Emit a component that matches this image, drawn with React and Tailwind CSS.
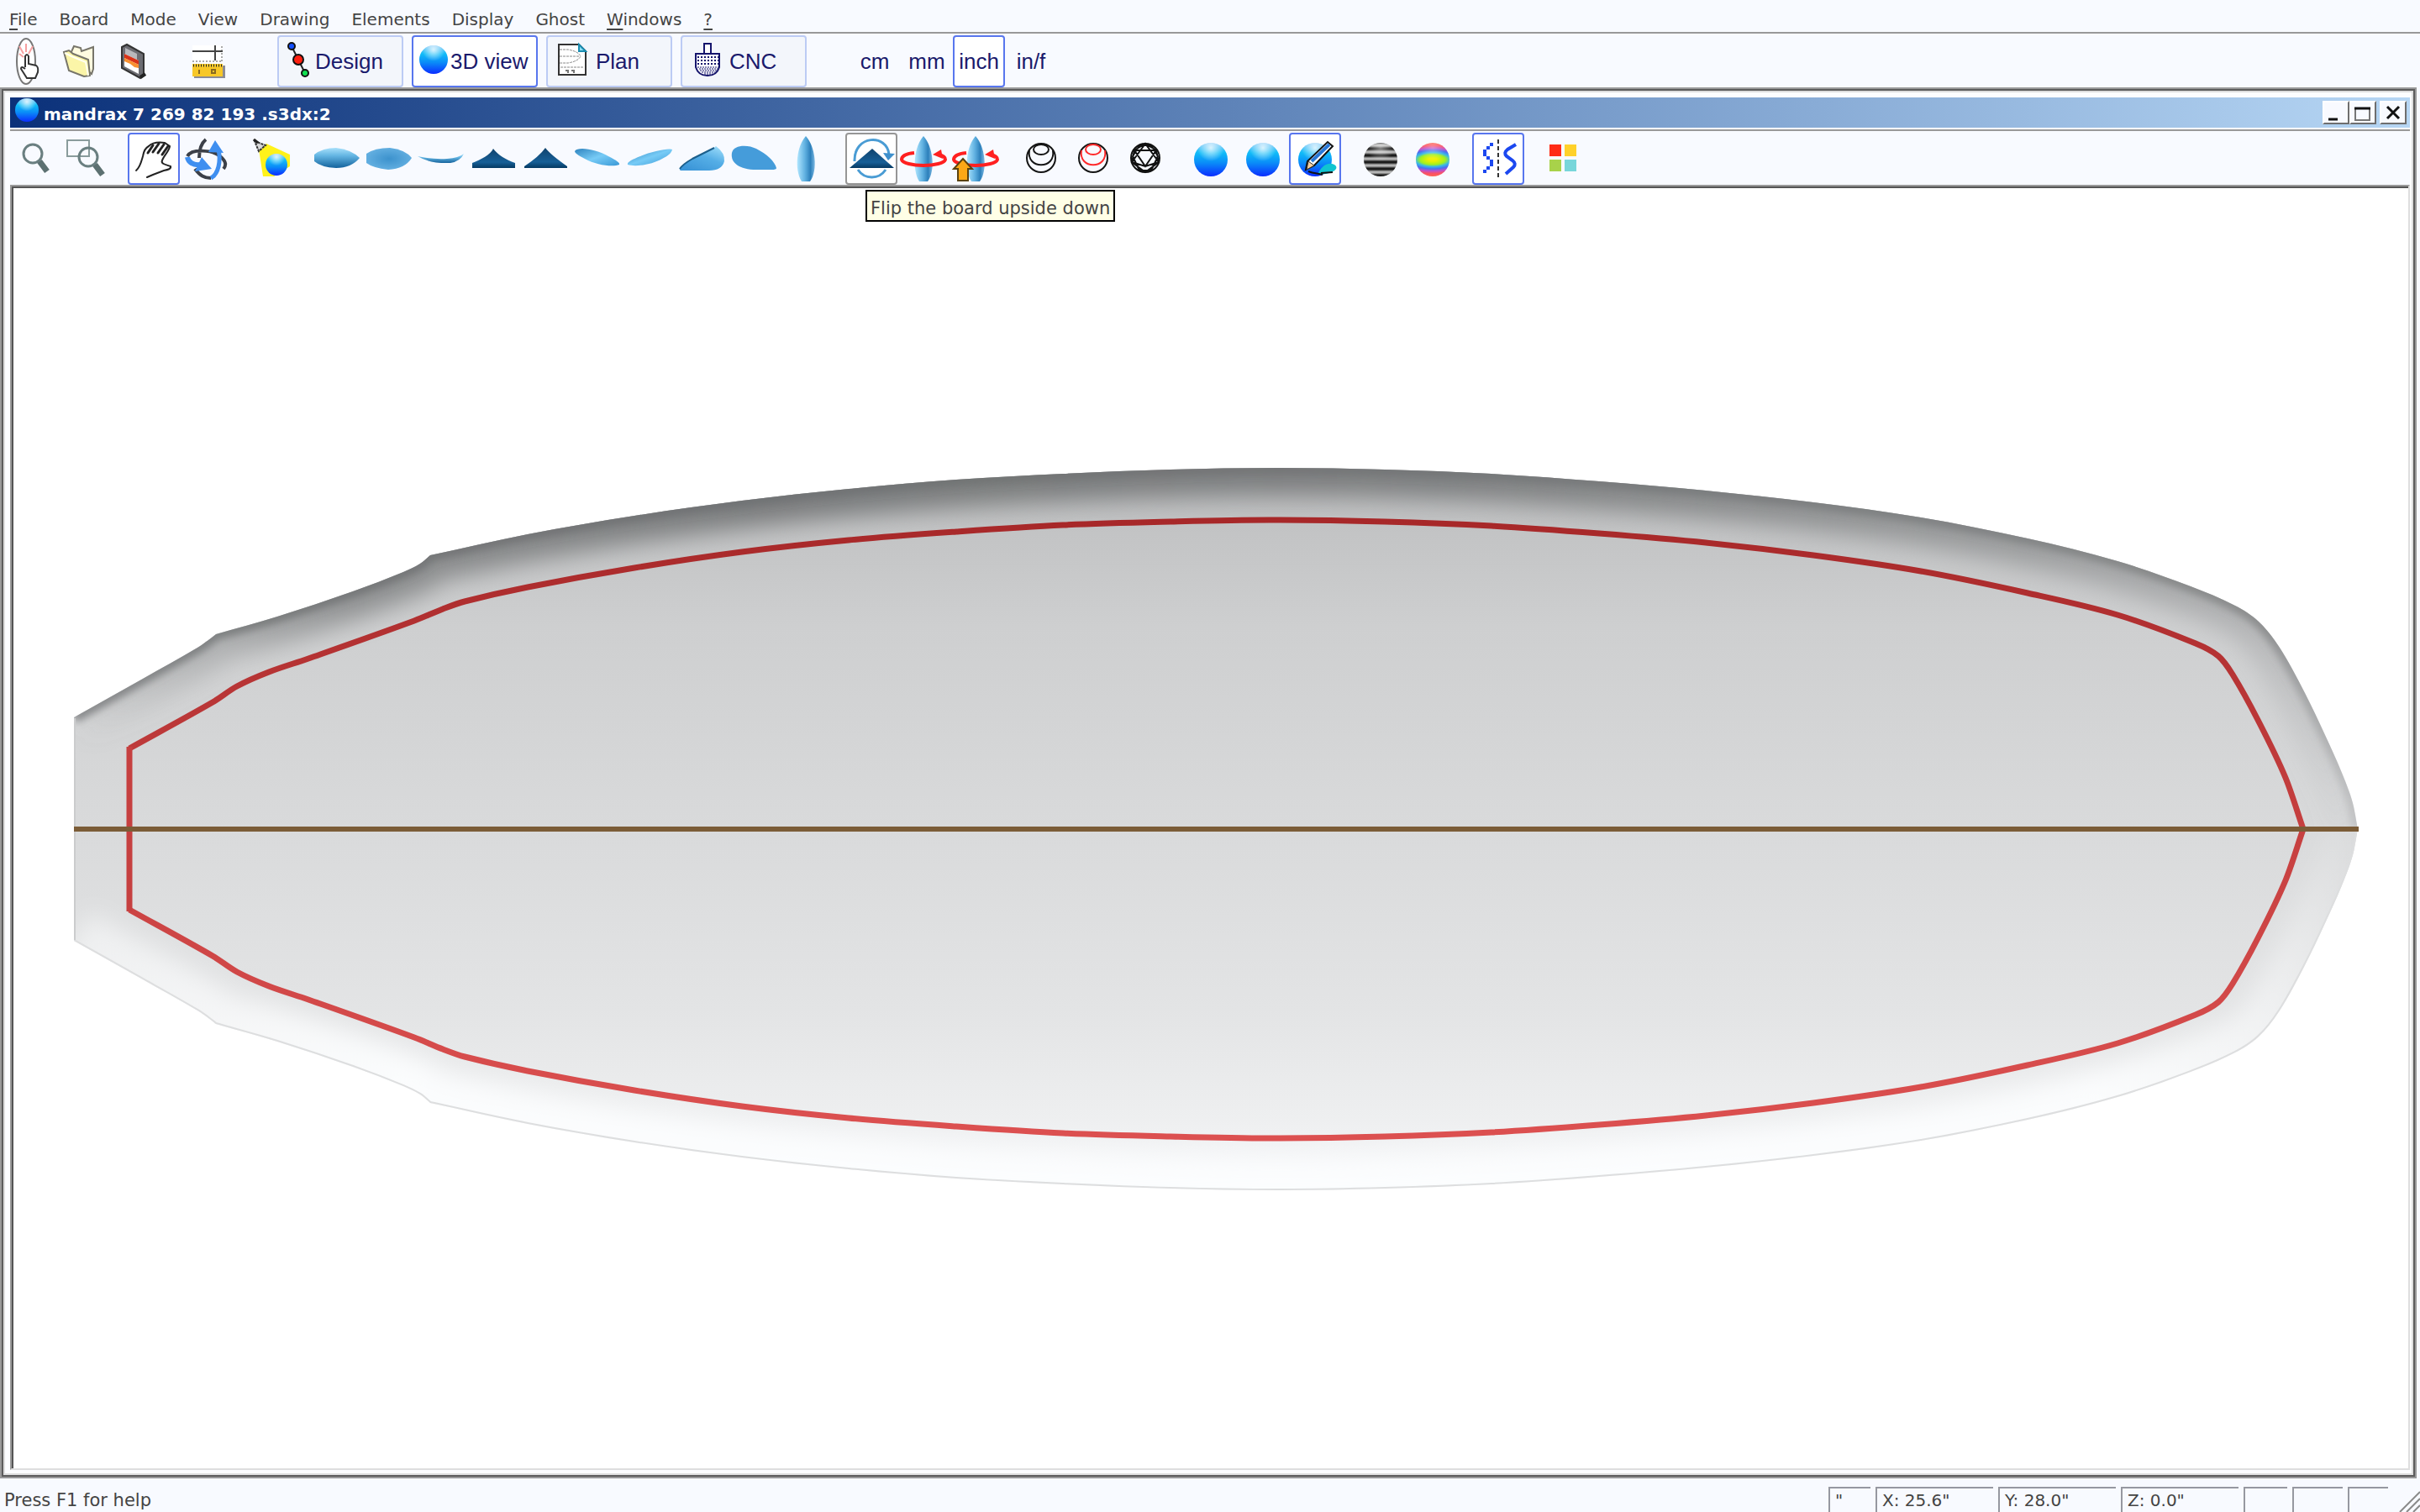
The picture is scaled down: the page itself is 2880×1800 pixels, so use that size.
import { useState } from 'react'
import clsx from 'clsx'

const MENUS = [
  { key: 'F', rest: 'ile' },
  { key: '', rest: 'Board' },
  { key: '', rest: 'Mode' },
  { key: '', rest: 'View' },
  { key: '', rest: 'Drawing' },
  { key: '', rest: 'Elements' },
  { key: '', rest: 'Display' },
  { key: '', rest: 'Ghost' },
  { key: 'W', rest: 'indows' },
  { key: '?', rest: '' },
]

const UNITS = ['cm', 'mm', 'inch', 'in/f']

// Half outlines of the board, tail to nose. y is measured on the upper half, the lower half is mirrored.
const AXIS = 987
const OUTLINE = [
  [[88, 854], [170, 808], [235, 771], [248, 762], [257, 755]],
  [[257, 755], [330, 734], [420, 704], [480, 681], [500, 671], [512, 661]],
  [
    [512, 661], [628, 636], [755, 614], [883, 596], [1010, 582], [1138, 571], [1265, 564], [1393, 559], [1520, 557],
    [1648, 559], [1775, 564], [1903, 573], [2030, 584], [2158, 598], [2286, 616], [2413, 641], [2520, 668],
    [2607, 698], [2660, 721], [2688, 740], [2713, 771], [2743, 825], [2767, 875], [2787, 920], [2800, 956], [2806, 987],
  ],
]
const STRINGER_BOX = [
  [
    [154, 891], [253, 836], [282, 817], [320, 800], [367, 784], [493, 739], [527, 725], [553, 716], [628, 699],
    [755, 676], [883, 657], [1010, 643], [1138, 633], [1265, 625], [1393, 621], [1510, 619], [1648, 621], [1775, 626],
    [1903, 635], [2030, 646], [2158, 661], [2286, 680], [2413, 706], [2520, 732], [2613, 766], [2640, 781],
    [2657, 803], [2687, 857], [2720, 926], [2741, 987],
  ],
]

const mirror = (sections) => sections.map((s) => s.map(([x, y]) => [x, 2 * AXIS - y]))

// Smooth curve through the points of one section
const spline = (pts) =>
  pts.slice(1).map((p, i) => {
    const a = pts[i - 1] || pts[i]
    const b = pts[i]
    const d = pts[i + 2] || p
    // tangents scaled by the span keep uneven point spacing from overshooting
    const span = p[0] - b[0]
    const t1 = (p[1] - a[1]) / (p[0] - a[0] || 1)
    const t2 = (d[1] - b[1]) / (d[0] - b[0] || 1)
    return `C${b[0] + span / 3} ${b[1] + (t1 * span) / 3} ${p[0] - span / 3} ${p[1] - (t2 * span) / 3} ${p[0]} ${p[1]}`
  }).join('')

const curve = (sections) => `M${sections[0][0].join(' ')}` + sections.map(spline).join('')
const top = curve(OUTLINE)
const bottom = curve(mirror(OUTLINE))
const boxTop = curve(STRINGER_BOX)
const boxBottom = curve(mirror(STRINGER_BOX))

function Defs() {
  return (
    <svg width="0" height="0" className="absolute" aria-hidden="true">
      <defs>
        <linearGradient id="sphere" x1="0" y1="0" x2="0" y2="1">
          <stop offset="0" stopColor="#7fc8f8" />
          <stop offset=".3" stopColor="#10bcf8" />
          <stop offset=".6" stopColor="#0a8cf8" />
          <stop offset="1" stopColor="#0b2cff" />
        </linearGradient>
        <radialGradient id="shine" cx=".5" cy=".15" r=".4">
          <stop offset="0" stopColor="#fff" stopOpacity=".8" />
          <stop offset="1" stopColor="#fff" stopOpacity="0" />
        </radialGradient>
        <linearGradient id="deck" x1="0" y1="0" x2="0" y2="1">
          <stop offset="0" stopColor="#a8e0fb" />
          <stop offset=".4" stopColor="#62b4e2" />
          <stop offset="1" stopColor="#14629c" />
        </linearGradient>
        <radialGradient id="under">
          <stop offset="0" stopColor="#3c92cd" />
          <stop offset="1" stopColor="#62aee0" />
        </radialGradient>
        <linearGradient id="upright">
          <stop offset="0" stopColor="#b0e6ff" />
          <stop offset=".45" stopColor="#5fb0e0" />
          <stop offset=".75" stopColor="#2d80bb" />
          <stop offset="1" stopColor="#7cb8e2" />
        </linearGradient>
        <linearGradient id="slice" x1="0" y1="0" x2="0" y2="1">
          <stop offset="0" stopColor="#10436d" />
          <stop offset=".7" stopColor="#175f97" />
          <stop offset="1" stopColor="#053962" />
        </linearGradient>
        <linearGradient id="persp" x1="0" y1="0" x2="1" y2="1">
          <stop offset="0" stopColor="#2f84bf" />
          <stop offset=".5" stopColor="#77cbf6" />
          <stop offset="1" stopColor="#3a98d6" />
        </linearGradient>
        <linearGradient id="wing" x1="1" y1="0" x2=".3" y2="1">
          <stop offset="0" stopColor="#a6e2fc" />
          <stop offset=".5" stopColor="#55aee6" />
          <stop offset="1" stopColor="#3c96d8" />
        </linearGradient>
        <linearGradient id="zebra" x1="0" y1="15" x2="0" y2="19" gradientUnits="userSpaceOnUse" spreadMethod="reflect">
          <stop offset=".2" stopColor="#b4b4b4" />
          <stop offset=".8" stopColor="#1c1c1c" />
        </linearGradient>
        <radialGradient id="rainbow" cx=".5" cy=".5" r=".5" gradientTransform="translate(-.75 0) scale(2.5 1)">
          <stop offset=".1" stopColor="#eef000" />
          <stop offset=".3" stopColor="#a0f020" />
          <stop offset=".42" stopColor="#38b8e8" />
          <stop offset=".55" stopColor="#4a70f0" />
          <stop offset=".68" stopColor="#c050c8" />
          <stop offset=".82" stopColor="#f85068" />
          <stop offset="1" stopColor="#ff6450" />
        </radialGradient>
      </defs>
    </svg>
  )
}

function Sphere({ cx = 31, cy = 32, r = 20 }) {
  return (
    <>
      <circle cx={cx} cy={cy} r={r} fill="url(#sphere)" />
      <circle cx={cx} cy={cy} r={r} fill="url(#shine)" />
    </>
  )
}

function Icon({ children }) {
  return (
    <svg viewBox="0 0 62 62" fill="none" className="h-[62px] w-[62px] shrink-0" aria-hidden="true">
      {children}
    </svg>
  )
}

const Upright = () => <path d="M31 4C20 16 17 44 26 58H36C46 44 42 16 31 4Z" fill="url(#upright)" />

const Spin = () => (
  <>
    <path d="M20 24C10 25 5 28 5 32C6 36 18 39 31 39C44 39 56 36 57 32C57 29 54 27 49 26" stroke="#ff2020" strokeWidth="4" />
    <path d="M42 26L52 20L54 31Z" fill="#ff2020" />
  </>
)

const Wire = ({ color = '#151515' }) => (
  <>
    <circle cx="31" cy="30" r="17" stroke="#151515" strokeWidth="2" />
    <ellipse cx="31" cy="20" rx="9" ry="6" stroke={color} strokeWidth="2" />
    <path d="M17 21C13 44 49 44 45 21" stroke={color} strokeWidth="2" />
  </>
)

const Lens = ({ x, y }) => (
  <>
    <circle cx={x} cy={y} r="11" stroke="#6a7f80" strokeWidth="3" />
    <path d={`M${x + 8} ${y + 9}L${x + 17} ${y + 21}`} stroke="#5c7071" strokeWidth="7" />
  </>
)

const VIEW_TOOLS = [
  [
    { id: 'Zoom', icon: <Lens x={27} y={25} /> },
    { id: 'Zoom window', icon: <><path d="M6 9H32V28H6Z" stroke="#8a9c9c" strokeWidth="2" /><Lens x={31} y={29} /></> },
  ],
  [
    {
      id: 'Pan', on: true,
      icon: (
        <g stroke="#222" strokeWidth="2" strokeLinecap="round">
          <path d="M10 45C15 41 16 35 18 28C19 22 21 18 25 16C29 12 36 11 44 12L50 16C50 21 43 27 41 33C39 37 45 38 51 40C52 43 48 44 43 45L30 50L23 53" />
          <path d="M24 24L30 15M30 23L37 13M36 24L43 14M41 26L48 16" strokeWidth="3" />
        </g>
      ),
    },
    {
      id: 'Rotate',
      icon: (
        <>
          <path d="M31 8C25 13 23 22 23 30M9 28C14 19 38 20 48 28C56 35 55 39 52 43M18 43C24 51 29 54 37 54" stroke="#3c4048" strokeWidth="4" />
          <path d="M42 9L52 24L34 23Z" fill="#3f8ff0" />
          <path d="M46 20C49 34 46 49 37 54" stroke="#3f8ff0" strokeWidth="5" />
          <path d="M9 29C10 35 16 39 24 38" stroke="#3f8ff0" strokeWidth="6" />
          <path d="M26 29L38 43L18 46Z" fill="#3f8ff0" />
        </>
      ),
    },
  ],
  [
    {
      id: 'Light',
      icon: (
        <>
          <path d="M16 20L25 13L53 26V40L34 52H21Z" fill="#fff21a" />
          <path d="M11 10L24 15L16 22Z" fill="#d8d8d8" stroke="#333" strokeWidth="2" strokeDasharray="3 1" />
          <path d="M10 8L15 12" stroke="#222" strokeWidth="3" />
          <Sphere cx={37} cy={38} r={13} />
        </>
      ),
    },
  ],
  [
    { id: 'Top view', icon: <path d="M4 26Q14 18 30 18Q48 20 58 30Q48 42 30 42Q12 41 4 34Z" fill="url(#deck)" /> },
    { id: 'Bottom view', icon: <path d="M4 25Q14 18 32 18Q50 20 58 30Q50 43 30 44Q12 42 4 36Z" fill="url(#under)" /> },
    { id: 'Side view', icon: <path d="M3 28Q20 32 38 31Q52 30 58 25Q54 34 42 36Q18 37 3 28Z" fill="url(#deck)" /> },
    { id: 'Front view', icon: <path d="M31 19C36 26 46 32 57 36V42H6V36C16 32 28 26 31 19Z" fill="url(#slice)" /> },
    { id: 'Back view', icon: <path d="M31 18Q37 26 57 40V42H6V40Q24 28 31 18Z" fill="url(#slice)" /> },
    { id: 'Left perspective', icon: <path d="M4 22C8 16 30 20 44 28C54 33 58 36 57 38C50 41 30 39 16 31C8 27 4 24 4 22Z" fill="url(#persp)" /> },
    { id: 'Right perspective', icon: <path d="M58 20C54 18 34 22 20 28C10 32 4 35 5 38C14 41 34 38 46 31C54 27 57 24 58 20Z" fill="url(#persp)" /> },
    {
      id: 'Rear perspective',
      icon: (
        <>
          <path d="M5 43Q8 38 20 31L46 18L48 16Q59 24 58 34Q55 45 40 45H8Q4 45 5 43Z" fill="url(#wing)" />
          <path d="M5 43Q8 38 20 31L46 18" stroke="#1c5f8c" strokeWidth="2" />
        </>
      ),
    },
    { id: 'Nose perspective', icon: <path d="M5 24C7 14 24 14 34 19C46 25 56 34 58 42Q58 44 52 44H34C14 44 3 36 5 24Z" fill="#459cda" /> },
    { id: 'Upright view', icon: <Upright /> },
  ],
  [
    {
      id: 'Flip', hover: true, tip: 'Flip the board upside down',
      icon: (
        <>
          <path d="M11 34C10 2 50 1 52 26M15 44C23 56 40 56 48 44" stroke="#4a9cd4" strokeWidth="3" />
          <path d="M45 24L59 25L51 33Z" fill="#3f90cc" />
          <path d="M32 19L58 42H5Z" fill="url(#slice)" />
        </>
      ),
    },
    { id: 'Spin', icon: <><Upright /><Spin /></> },
    {
      id: 'Spin up',
      icon: (
        <>
          <Upright />
          <Spin />
          <path d="M16 31L27 43H22V57H10V43H5Z" fill="#fca816" stroke="#5a4210" strokeWidth="2" />
        </>
      ),
    },
  ],
  [
    { id: 'Slices', icon: <Wire /> },
    { id: 'Red slices', icon: <Wire color="#ff2a2a" /> },
    {
      id: 'Mesh',
      icon: (
        <g stroke="#111" strokeWidth="2">
          <circle cx="31" cy="30" r="17" />
          <path d="M31 13L18 21L15 35L31 40L47 35L44 21ZM18 21L44 21L31 40ZM31 13L15 35L31 47L47 35ZM24 15L38 15L46 28L38 45H24L16 28Z" />
        </g>
      ),
    },
  ],
  [
    { id: 'Smooth', icon: <Sphere /> },
    { id: 'Matt', icon: <Sphere /> },
    {
      id: 'Paint', on: true,
      icon: (
        <>
          <Sphere />
          <path d="M34 50C38 40 46 34 54 38C60 42 54 47 44 49Z" fill="#10c4d0" />
          <path d="M23 46C30 49 34 48 40 50M38 48L52 47" stroke="#111" strokeWidth="2" />
          <path d="M20 44L22 34L46 11L52 16L30 39Z" fill="#fff" stroke="#111" strokeWidth="2" />
          <path d="M27 34L48 14" stroke="#2878d8" strokeWidth="4" />
          <path d="M21 44L23 34L30 39Z" fill="#f8d0a0" stroke="#333" />
        </>
      ),
    },
  ],
  [
    { id: 'Zebra', icon: <><circle cx="31" cy="32" r="20" fill="url(#zebra)" /><circle cx="31" cy="32" r="20" fill="url(#shine)" opacity=".6" /></> },
    { id: 'Curvature', icon: <><circle cx="31" cy="32" r="20" fill="url(#rainbow)" /><circle cx="31" cy="32" r="20" fill="url(#shine)" opacity=".4" /></> },
  ],
  [
    {
      id: 'Smoothing', on: true,
      icon: (
        <>
          <g fill="#1c48f0">
            <path d="M21 12h4v4h-4zM17 16h4v4h-4zM13 20h4v8h-4zM17 28h4v4h-4zM21 32h4v8h-4zM17 40h4v4h-4zM13 44h4v4h-4z" />
          </g>
          <path d="M31 8V54" stroke="#333" strokeWidth="2" strokeDasharray="5 3" />
          <path d="M52 14L42 20Q37 24 41 28L48 33Q53 37 49 41L40 49" stroke="#1c48f0" strokeWidth="4" />
        </>
      ),
    },
  ],
  [
    {
      id: 'Colors',
      icon: (
        <>
          <path d="M14 14H28V28H14Z" fill="#ff2b16" />
          <path d="M32 14H46V28H32Z" fill="#ffd12a" />
          <path d="M14 32H28V46H14Z" fill="#a8d24a" />
          <path d="M32 32H46V46H32Z" fill="#78d6da" />
        </>
      ),
    },
  ],
]

const MODES = [
  {
    id: 'Design', iconWidth: 'w-[43px]', box: '0 0 43 62',
    icon: (
      <>
        <path d="M15 13L31 45" stroke="#222" strokeWidth="2" />
        <g stroke="#111" strokeWidth="2">
          <circle cx="15" cy="13" r="4" fill="#1450ff" />
          <circle cx="23" cy="29" r="6" fill="#ff2010" />
          <circle cx="31" cy="45" r="4" fill="#10e050" />
        </g>
      </>
    ),
  },
  { id: '3D view', iconWidth: 'w-11', box: '0 0 44 62', icon: <Sphere cx={24} cy={29} r={17} /> },
  {
    id: 'Plan', iconWidth: 'w-[57px]', box: '0 0 57 62',
    icon: (
      <>
        <path d="M13 11H37L45 19V47H13Z" fill="#fff" stroke="#333" strokeWidth="2" />
        <path d="M37 11V19H45Z" fill="#8ce0f4" stroke="#1a8cb0" strokeWidth="2" />
        <path d="M14 17H24Q36 19 39 25Q36 31 24 33H14M14 25H38M15 38H42" stroke="#888" strokeDasharray="3 1" />
        <path d="M21 42h3v3M28 42h3v3" stroke="#777" strokeWidth="2" />
      </>
    ),
  },
  {
    id: 'CNC', iconWidth: 'w-14', box: '0 0 56 62',
    icon: (
      <>
        <path d="M26 22V10H34V22" fill="#fff" stroke="#15156c" strokeWidth="2" />
        <path d="M16 22H44V38Q41 48 30 48Q19 48 16 38Z" fill="#fff" stroke="#15156c" strokeWidth="2" />
        <path d="M18 26H43M18 30H43M18 34H43" stroke="#15156c" strokeWidth="2" strokeDasharray="2 2" />
        <path d="M18 38H43M20 40H42M21 42H41M23 44H39M26 46H36" stroke="#15156c" strokeWidth="1" strokeDasharray="2 1" />
      </>
    ),
  },
]

function FileTools() {
  const cell = 'flex h-[62px] w-[62px]'
  return (
    <>
      <button aria-label="New board" className={cell}>
        <Icon>
          <ellipse cx="30" cy="31" rx="11" ry="27" fill="#fff" stroke="#777" strokeWidth="2" />
          <path d="M22 13L27 22M30 10V20M38 13L33 22M22 22L27 26" stroke="#f6a0a0" strokeWidth="2" />
          <path d="M29 38V25Q31 21 33 25V34L42 36Q45 38 44 44L41 51H31L24 40Q24 36 29 40" fill="#fff" stroke="#333" strokeWidth="2" />
        </Icon>
      </button>
      <button aria-label="Open" className={cell}>
        <Icon>
          <path d="M25 13L33 15L34 19L48 14V40L46 46L20 24Z" fill="#fffbe0" stroke="#77756a" strokeWidth="2" />
          <path d="M13 20L19 18L24 22L42 29L44 48L37 49L19 42Z" fill="#fbf5a8" stroke="#77756a" strokeWidth="2" />
          <path d="M14 21L22 25L39 32L42 48" stroke="#fffff0" strokeWidth="2" />
        </Icon>
      </button>
      <button aria-label="Save" className={cell}>
        <Icon>
          <path d="M20 14L26 11L46 22V48L42 51L20 39Z" fill="#6c6c72" stroke="#333" strokeWidth="2" />
          <path d="M24 15L38 22V30L24 23Z" fill="#b8b8bc" />
          <path d="M23 22L40 30V46L23 37Z" fill="#fff" />
          <path d="M23 22L40 30V35L23 27Z" fill="#d83218" />
          <path d="M23 27L40 35V39L35 38L30 34L23 31Z" fill="#f89030" />
          <path d="M42 50L48 46" stroke="#222" strokeWidth="4" />
        </Icon>
      </button>
      <button aria-label="Measurements" className="ml-[30px] flex h-[62px] w-[62px]">
        <Icon>
          <path d="M12 12H48V34H12Z" fill="#fff" />
          <path d="M12 19H48M39 12V30" stroke="#444" strokeWidth="2" />
          <path d="M47 13V32M12 31H48" stroke="#555" strokeWidth="1" strokeDasharray="2 2" />
          <path d="M14 36H51V51H14Z" fill="#8c8c94" />
          <path d="M12 34H48V49H12Z" fill="#f8c828" />
          <path d="M13 36H48" stroke="#222" strokeWidth="3" strokeDasharray="1 2" />
          <path d="M20 41V46M35 41H39V45H35Z" stroke="#8a6a20" strokeWidth="2" />
        </Icon>
      </button>
    </>
  )
}

function Board() {
  return (
    <svg viewBox="16 224 2850 1524" className="block h-full w-full" role="img" aria-label="Board bottom view">
      <defs>
        <linearGradient id="hull" x1="0" y1="557" x2="0" y2="1417" gradientUnits="userSpaceOnUse">
          <stop offset="0" stopColor="#b6b7b8" />
          <stop offset=".08" stopColor="#c2c3c4" />
          <stop offset=".22" stopColor="#cecfd0" />
          <stop offset=".5" stopColor="#d9dadb" />
          <stop offset=".75" stopColor="#e3e4e5" />
          <stop offset=".9" stopColor="#eeeff0" />
          <stop offset="1" stopColor="#f6f7f9" />
        </linearGradient>
        <linearGradient id="boxline" x1="0" y1="619" x2="0" y2="1355" gradientUnits="userSpaceOnUse">
          <stop offset="0" stopColor="#a72829" />
          <stop offset=".5" stopColor="#c64040" />
          <stop offset="1" stopColor="#dc5050" />
        </linearGradient>
        <linearGradient id="shade" x1="88" y1="0" x2="2806" y2="0" gradientUnits="userSpaceOnUse">
          <stop offset="0" stopColor="#77797a" stopOpacity="0" />
          <stop offset=".06" stopColor="#77797a" stopOpacity=".35" />
          <stop offset=".12" stopColor="#77797a" stopOpacity=".7" />
          <stop offset=".3" stopColor="#77797a" stopOpacity=".95" />
          <stop offset=".6" stopColor="#77797a" stopOpacity=".9" />
          <stop offset=".85" stopColor="#7f8182" stopOpacity=".6" />
          <stop offset=".95" stopColor="#88898b" stopOpacity=".4" />
          <stop offset="1" stopColor="#909193" stopOpacity="0" />
        </linearGradient>
        <linearGradient id="glow" x1="88" y1="0" x2="2806" y2="0" gradientUnits="userSpaceOnUse">
          <stop offset="0" stopColor="#fdfeff" stopOpacity=".5" />
          <stop offset=".15" stopColor="#fdfeff" stopOpacity=".9" />
          <stop offset=".88" stopColor="#fdfeff" stopOpacity=".9" />
          <stop offset=".96" stopColor="#fdfeff" stopOpacity=".5" />
          <stop offset="1" stopColor="#fdfeff" stopOpacity="0" />
        </linearGradient>
        <linearGradient id="edge" x1="88" y1="0" x2="2806" y2="0" gradientUnits="userSpaceOnUse">
          <stop offset="0" stopColor="#66686a" stopOpacity=".7" />
          <stop offset=".96" stopColor="#77797a" stopOpacity=".7" />
          <stop offset="1" stopColor="#909193" stopOpacity=".3" />
        </linearGradient>
        <clipPath id="upper">
          <path d={`${top}H88Z`} />
        </clipPath>
        <clipPath id="lower">
          <path d={`${bottom}H88Z`} />
        </clipPath>
        <filter id="soft" x="0" y="400" width="2900" height="1200" filterUnits="userSpaceOnUse">
          <feGaussianBlur stdDeviation="14" />
        </filter>
        <filter id="crisp" x="0" y="400" width="2900" height="1200" filterUnits="userSpaceOnUse">
          <feGaussianBlur stdDeviation="5" />
        </filter>
      </defs>
      <path d={`${top}H88Z`} fill="url(#hull)" />
      <path d={`${bottom}H88Z`} fill="url(#hull)" />
      <g clipPath="url(#upper)" fill="none">
        <path d={top} stroke="url(#shade)" strokeWidth="64" filter="url(#soft)" />
        <path d={top} stroke="url(#edge)" strokeWidth="14" filter="url(#crisp)" />
      </g>
      <g clipPath="url(#lower)" fill="none">
        <path d={bottom} stroke="url(#glow)" strokeWidth="76" filter="url(#soft)" />
        <path d={bottom} stroke="#dddedf" strokeWidth="4" />
      </g>
      <path d="M89 855V1119" stroke="#cbcccd" strokeWidth="2" />
      <path d={boxTop} fill="none" stroke="url(#boxline)" strokeWidth="7" />
      <path d={boxBottom} fill="none" stroke="url(#boxline)" strokeWidth="7" />
      <path d="M154 889V1085" stroke="#c64040" strokeWidth="7" />
      <path d="M88 987H2807" stroke="#7b5c37" strokeWidth="6" />
    </svg>
  )
}

function TitleButton({ label, children, className }) {
  return (
    <button
      aria-label={label}
      className={clsx('flex h-7 w-8 border-2 border-t-white border-r-[#6e6e6e] border-b-[#6e6e6e] border-l-white bg-[#f8faff]', className)}
    >
      <svg viewBox="0 0 28 24" className="h-6 w-7" fill="none" stroke="#111" aria-hidden="true">{children}</svg>
    </button>
  )
}

function StatusCell({ className, children }) {
  return <div className={clsx('h-[30px] border-t-2 border-l-2 border-[#9698a0] pt-[2px] pl-1.5', className)}>{children}</div>
}

export default function App() {
  const [mode, setMode] = useState('3D view')
  const [unit, setUnit] = useState('inch')

  return (
    <div className="flex h-screen flex-col overflow-hidden bg-[#f8faff] font-['DejaVu_Sans',sans-serif] text-[20px] leading-6 text-[#444]">
      <Defs />

      {/* Menu bar */}
      <nav className="flex h-10 shrink-0 items-center gap-[26px] border-b-2 border-[#999] pt-2 pl-[11px]">
        {MENUS.map(({ key, rest }) => (
          <button key={key + rest}>
            {key && <u className="decoration-2 underline-offset-4">{key}</u>}{rest}
          </button>
        ))}
      </nav>

      {/* Main toolbar */}
      <header className="flex shrink-0 pt-[2px] pl-px font-['Liberation_Sans',sans-serif] text-[26px] text-[#1a1a6c]">
        <FileTools />
        <div className="ml-[51px] flex gap-[10px]">
          {MODES.map(({ id, icon, iconWidth, box }) => (
            <button
              key={id}
              onClick={() => setMode(id)}
              className={clsx(
                'flex h-[62px] w-[150px] items-center rounded-[4px] border-2',
                mode === id ? 'border-[#5876ee] bg-white' : 'border-[#bccbf4] bg-[#f3f6fb]'
              )}
            >
              <svg viewBox={box} fill="none" className={clsx('h-[62px] shrink-0', iconWidth)} aria-hidden="true">{icon}</svg>
              <span className="whitespace-nowrap">{id}</span>
            </button>
          ))}
        </div>
        <div className="ml-[50px] flex">
          {UNITS.map((u) => (
            <button
              key={u}
              onClick={() => setUnit(u)}
              className={clsx(
                'flex h-[62px] w-[62px] items-center justify-center rounded-[4px] border-2',
                unit === u ? 'border-[#5876ee] bg-white' : 'border-transparent'
              )}
            >
              {u}
            </button>
          ))}
        </div>
      </header>

      {/* Document window */}
      <main className="mr-1 flex min-h-0 flex-1 flex-col border-2 border-[#999]">
        <div className="flex min-h-0 flex-1 flex-col border-2 border-[#5c5c5c]">
          <div className="flex min-h-0 flex-1 flex-col border-2 border-[#dedede] bg-[#fcfdff] pt-1.5 pr-[2px] pb-1 pl-1.5">
            <div className="flex h-9 shrink-0 items-center bg-linear-to-r from-[#0b317a] to-[#b6d6f4] pr-1">
              <svg viewBox="0 0 36 36" className="h-9 w-9 self-start" aria-hidden="true"><Sphere cx={20} cy={15} r={14} /></svg>
              <h1 className="pt-1 pl-1 font-bold text-white">mandrax 7 269 82 193 .s3dx:2</h1>
              <TitleButton label="Minimize" className="ml-auto"><path d="M5 20H16" strokeWidth="3" /></TitleButton>
              <TitleButton label="Maximize">
                <path d="M5 6V21H22V6" stroke="#777" strokeWidth="2" /><path d="M4 7H23" strokeWidth="3" />
              </TitleButton>
              <TitleButton label="Close" className="ml-1"><path d="M7 5L21 19M21 5L7 19" strokeWidth="3" /></TitleButton>
            </div>

            {/* 3D toolbar */}
            <div className="mt-[2px] flex shrink-0 gap-4 border-t-2 border-[#999] bg-[#f8faff] pt-[2px]">
              {VIEW_TOOLS.map((group, i) => (
                <div key={i} className="flex">
                  {group.map(({ id, icon, on, hover, tip }) => (
                    <div key={id} className="relative">
                      <button
                        aria-label={id}
                        className={clsx(
                          'flex h-[62px] w-[62px] items-center justify-center rounded-[4px]',
                          on && 'bg-white outline-2 -outline-offset-2 outline-[#5876ee]',
                          hover && 'bg-white outline-2 -outline-offset-2 outline-[#969696]'
                        )}
                      >
                        <Icon>{icon}</Icon>
                      </button>
                      {tip && (
                        <div role="tooltip" className="absolute top-[68px] left-6 z-10 border-2 border-black bg-[#ffffe6] px-1 pt-2 pb-[2px] text-[21px] whitespace-nowrap">
                          {tip}
                        </div>
                      )}
                    </div>
                  ))}
                </div>
              ))}
            </div>

            {/* Viewport */}
            <div className="min-h-0 flex-1 border-2 border-t-[#999] border-r-[#dedede] border-b-[#dedede] border-l-[#999]">
              <div className="h-full border-t-2 border-l-2 border-[#555] bg-white">
                <Board />
              </div>
            </div>
          </div>
        </div>
      </main>

      {/* Status bar */}
      <footer className="flex h-10 shrink-0 items-end gap-1.5 pt-2">
        <p className="mr-auto h-[30px] pt-1 pl-[5px] text-[21px]">Press F1 for help</p>
        <StatusCell className="w-[50px]">"</StatusCell>
        <StatusCell className="w-[140px]">X: 25.6"</StatusCell>
        <StatusCell className="w-[140px]">Y: 28.0"</StatusCell>
        <StatusCell className="w-[140px]">Z: 0.0"</StatusCell>
        <StatusCell className="w-[52px]" />
        <StatusCell className="w-[60px]" />
        <StatusCell className="w-12" />
        <svg viewBox="0 0 32 30" className="h-[30px] w-8" stroke="#8a8a8a" strokeWidth="2" aria-hidden="true">
          <path d="M8 30L32 6M16 30L32 14M24 30L32 22" />
        </svg>
      </footer>
    </div>
  )
}
